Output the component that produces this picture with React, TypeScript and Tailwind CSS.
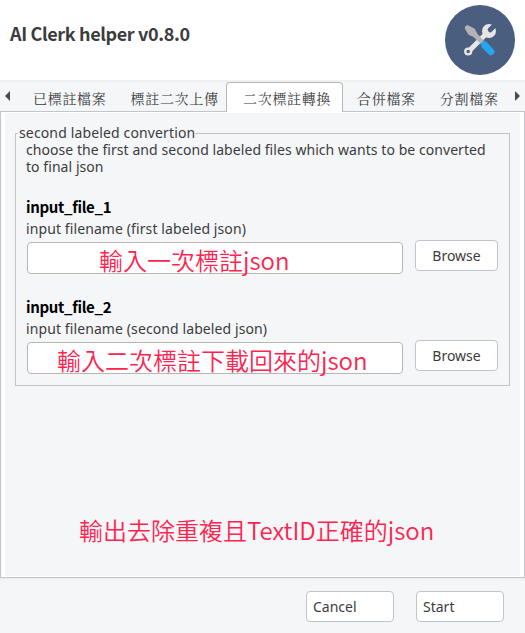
import React from "react";

const sans = "font-['Noto_Sans','Noto_Sans_CJK_TC',sans-serif]";
const cjk = "font-['Noto_Sans_CJK_TC',sans-serif]";

function ToolsLogo() {
  return (
    <svg className="mr-[10px] mt-[5px] size-[70px] shrink-0" viewBox="0 0 70 70">
      <circle cx="35" cy="35" r="35" fill="#4a5e80" />
      <path d="M24.500 45.500L42 28" stroke="#e6e6e6" strokeWidth="5" />
      <circle cx="23.200" cy="46.500" r="2.900" fill="#4a5e80" stroke="#e6e6e6" strokeWidth="2.400" />
      <circle cx="44" cy="26" r="7" fill="#e6e6e6" />
      <path d="M45.200 24.800L52 18" stroke="#4a5e80" strokeWidth="5" strokeLinecap="round" />
      <path d="M20 21.500l2.500-1.500 7.300 3.700 2.300 4.700 7 7.800-3 3-7.600-7.300-4.900-2.200-3.700-6z" fill="#b3b3b3" />
      <path d="M40 40.500l5.800 6.200" stroke="#25a5ee" strokeWidth="7" strokeLinecap="round" />
      <path d="M35.500 38.700l3.600-3.400 4 4.200-4.500 4.200z" fill="#25a5ee" />
    </svg>
  );
}

function Arrow({ d, className }: { d: string; className: string }) {
  return (
    <svg className={`h-[10px] w-[5px] shrink-0 ${className}`} viewBox="0 0 5 10">
      <path d={d} fill="#4a4d50" />
    </svg>
  );
}

function FileField({ title, hint, note, noteClass }: {
  title: string; hint: string; note: string; noteClass: string;
}) {
  return (
    <div className="h-[100px]">
      <div className={`h-[22px] text-[15px] font-bold leading-[22px] tracking-[-0.330px] text-black ${cjk}`}>{title}</div>
      <div className="h-[21px] text-[14px] leading-[21px] tracking-[0.100px]">{hint}</div>
      <div className="flex items-start gap-[12px] pl-px">
        <div className={`mt-[3px] flex h-[32px] w-[376px] items-center whitespace-nowrap rounded-[4px] border border-[#b6b6b3] bg-white text-[24px] font-[350] text-[#ff2450] ${cjk} ${noteClass}`}>
          <span className="relative top-[2px]">{note}</span>
        </div>
        <button className="mt-px h-[31px] w-[83px] rounded-[4px] border border-[#c0c4cc] bg-white text-[14px]">Browse</button>
      </div>
    </div>
  );
}

export default function App() {
  return (
    <div className={`flex h-[633px] w-[525px] flex-col overflow-hidden bg-[#f4f6f8] text-[#3c3c3c] ${sans}`}>
      <header className="flex h-[80px] shrink-0 justify-between bg-white">
        <h1 className={`ml-[10px] mt-[20px] text-[18px] font-bold leading-[26px] tracking-[-0.370px] ${cjk}`}>AI Clerk helper v0.8.0</h1>
        <ToolsLogo />
      </header>
      <nav className="flex h-[32px] shrink-0 border-t-2 border-[#eef0f1] font-['Noto_Serif_CJK_TC','Noto_Sans_CJK_TC',serif] text-[14px] tracking-[0.700px]">
        <div className="flex w-[226px] border-b border-[#c0c4cc]">
          <Arrow d="M5 0v10L0 5z" className="ml-[5px] mt-[9px]" />
          <span className="ml-[23px] mt-[5px] whitespace-nowrap leading-[22px]">已標註檔案</span>
          <span className="ml-[24px] mt-[5px] whitespace-nowrap leading-[22px]">標註二次上傳</span>
        </div>
        <div className="w-[117px] rounded-t-[4px] border border-b-0 border-[#b6b6b3] bg-white pl-[16px] pt-[4px] leading-[22px]">
          <span className="whitespace-nowrap">二次標註轉換</span>
        </div>
        <div className="flex w-[182px] border-b border-[#c0c4cc]">
          <span className="ml-[14px] mt-[5px] whitespace-nowrap leading-[22px]">合併檔案</span>
          <span className="ml-[24px] mt-[5px] whitespace-nowrap leading-[22px]">分割檔案</span>
          <Arrow d="M0 0v10l5-5z" className="ml-[16px] mt-[9px]" />
        </div>
      </nav>
      <main className="h-[466px] shrink-0 border-x border-b border-[#c0c4cc] bg-white px-[4px] pb-px pt-px">
        <div className="flex h-full flex-col bg-[#f4f6f8] px-[10px] pt-[12px]">
          <fieldset className="h-[261px] w-[495px] border border-[#c0c4cc] px-[10px]">
            <legend className="ml-[-8px] h-[16px] whitespace-nowrap pl-px text-[14px] leading-[16px] tracking-[0.140px]">second labeled convertion</legend>
            <p className="whitespace-nowrap text-[14px] leading-[17px] tracking-[0.060px]">
              choose the first and second labeled files which wants to be converted
              <br />
              to final json
            </p>
            <div className="pt-[21px]">
              <FileField title="input_file_1" hint="input filename (first labeled json)" note="輸入一次標註json" noteClass="pl-[71px]" />
              <FileField title="input_file_2" hint="input filename (second labeled json)" note="輸入二次標註下載回來的json" noteClass="pl-[29px]" />
            </div>
          </fieldset>
          <p className={`ml-[64px] mt-[126px] whitespace-nowrap text-[24px] font-[350] leading-[36px] text-[#ff2450] ${cjk}`}>輸出去除重複且TextID正確的json</p>
        </div>
      </main>
      <footer className="flex flex-1 justify-end gap-[22px] border-t-2 border-[#eef0f1] pr-[21px] pt-[11px] text-[14px]">
        <button className="h-[31px] w-[88px] rounded-[4px] border border-[#c0c4cc] bg-white pl-[6px] text-left">Cancel</button>
        <button className="h-[31px] w-[88px] rounded-[4px] border border-[#c0c4cc] bg-white pl-[6px] text-left">Start</button>
      </footer>
    </div>
  );
}
